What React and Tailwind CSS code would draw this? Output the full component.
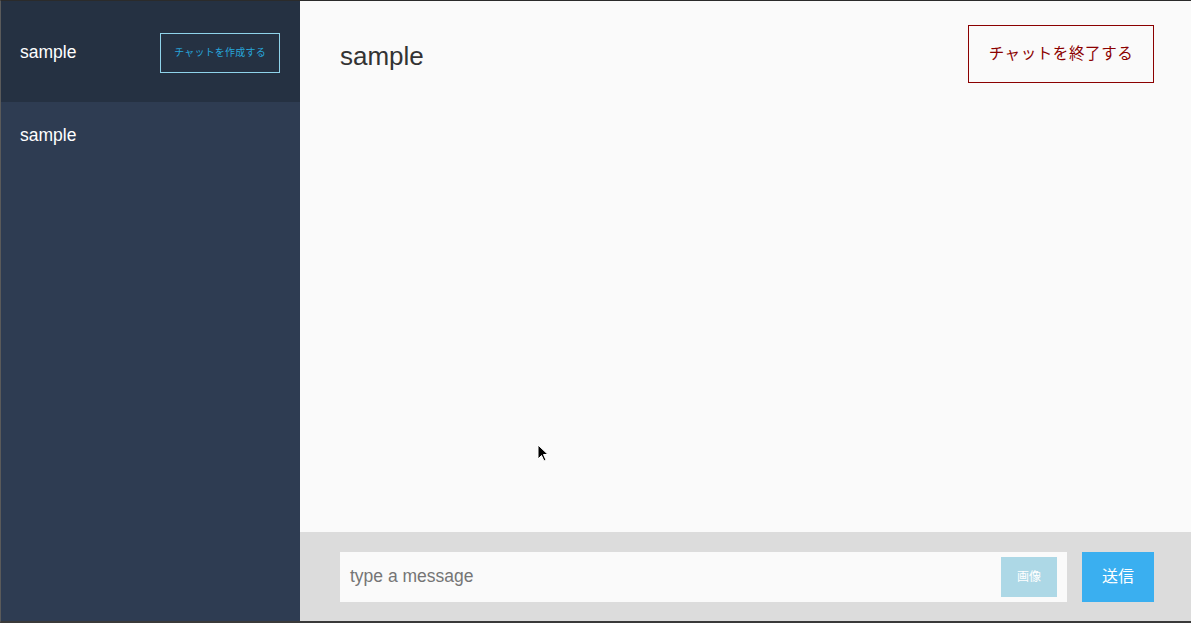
export default function App() {
  const font = { fontFamily: '"Liberation Sans", "Noto Sans CJK JP", sans-serif' };
  return (
    <div
      className="relative flex h-[623px] w-[1191px] overflow-hidden border-t border-l border-b-2 border-t-[#2b2b2b] border-l-[#5a5a5a] border-b-[#3a3a3a] bg-[#fafafa]"
      style={font}
    >
      <aside className="flex w-[299px] shrink-0 flex-col bg-[#2e3c52]">
        <div className="flex h-[101px] items-center justify-between bg-[#253142] pl-[19px] pr-[20px] pt-[2px]">
          <span className="text-[17.5px] text-white">sample</span>
          <button className="flex h-[40px] w-[120px] items-center justify-center border border-[#8fd3ea] text-[10px] tracking-[0.2px] text-[#27a6dc]">
            チャットを作成する
          </button>
        </div>
        <div className="flex h-[66px] items-center pl-[19px]">
          <span className="text-[17.5px] text-white">sample</span>
        </div>
      </aside>
      <main className="flex flex-1 flex-col">
        <div className="flex items-start justify-between pl-[40px] pr-[37px] pt-[24px]">
          <h1 className="mt-[16px] text-[26px] leading-[30px] text-[#333]">sample</h1>
          <button className="flex h-[58px] w-[186px] items-center justify-center border border-[#8b0000] text-[15.5px] tracking-[0.6px] text-[#8b0000]">
            チャットを終了する
          </button>
        </div>
        <div className="flex-1" />
        <div className="flex h-[89px] items-center bg-[#dcdcdc] pl-[40px] pr-[37px]">
          <div className="flex h-[50px] flex-1 items-center bg-[#fafafa] pl-[10px] pr-[10px]">
            <span className="flex-1 text-[17.5px] text-[#757575]">type a message</span>
            <button className="flex h-[40px] w-[56px] items-center justify-center bg-[#add8e6] text-[12px] text-white">
              画像
            </button>
          </div>
          <button className="ml-[15px] flex h-[50px] w-[72px] items-center justify-center bg-[#3aaff0] text-[16px] text-white">
            送信
          </button>
        </div>
      </main>
      <svg className="absolute left-[536px] top-[443px]" width="12" height="19" viewBox="0 0 12 19">
        <path d="M1 1 L1 15 L4.5 11.5 L7 17 L9 16 L6.5 10.5 L11 10.5 Z" fill="#000" stroke="#fff" strokeWidth="1" />
      </svg>
    </div>
  );
}
